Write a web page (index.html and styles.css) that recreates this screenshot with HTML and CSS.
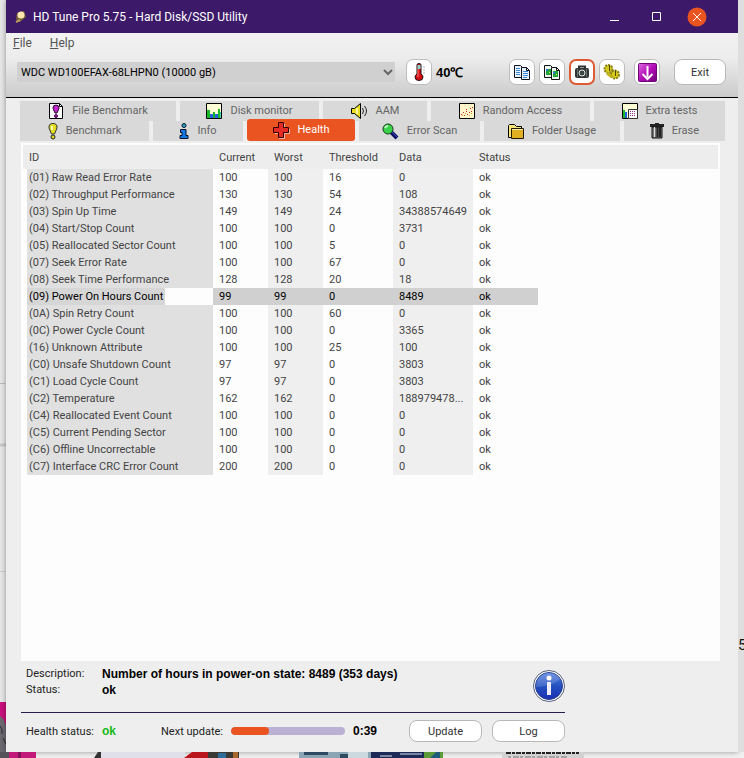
FILE: index.html
```html
<!DOCTYPE html>
<html lang="en">
  <head>
    <meta charset="UTF-8" />
    <meta name="viewport" content="width=device-width, initial-scale=1.0" />
    <title>HD Tune Pro 5.75 - Hard Disk/SSD Utility</title>
    <link rel="stylesheet" href="styles.css">
  </head>
  <body>
    <div class="desktop">
      <div class="edge edge-left">
        <svg width="6" height="376" viewBox="0 0 6 376">
          <path d="M0 7.500h5" stroke="#bbb" />
          <path d="M0 69h6" stroke="#c8c8c8" stroke-width="3" />
          <path d="M0 195.500h5" stroke="#ccc" />
          <path d="M0 326h6v24H0z" fill="#c9107c" />
          <path d="M0 340q4 2 6 10v26H0z" fill="#6c6870" />
          <path d="M0 350q3 3 2 8M3 362l3 6" stroke="#2a2a2e" fill="none" />
        </svg>
      </div>

      <main class="window">
        <header class="titlebar">
          <svg class="app-icon" width="12" height="14" viewBox="0 0 12 14">
            <path d="M2 3 9 1l2 6-6 5-4-3z" fill="#73613c" />
            <circle cx="6" cy="5" r="3.500" fill="#ffe9ae" />
            <path d="M1 12l4-2" stroke="#bb9c5d" stroke-width="2" />
          </svg>
          <h1>HD Tune Pro 5.75 - Hard Disk/SSD Utility</h1>
          <div class="window-controls">
            <button aria-label="Minimize">
              <svg width="20" height="20" viewBox="0 0 20 20"><path d="M5 13.500h9" stroke="#fff" /></svg>
            </button>
            <button aria-label="Maximize">
              <svg width="20" height="20" viewBox="0 0 20 20"><path d="M6.500 5.500h8v8h-8z" fill="none" stroke="#fff" /></svg>
            </button>
            <button aria-label="Close">
              <svg width="20" height="20" viewBox="0 0 20 20">
                <circle cx="10" cy="10" r="9.500" fill="#e95420" />
                <path d="M6 6l8 8M14 6l-8 8" stroke="#fff" />
              </svg>
            </button>
          </div>
        </header>

        <div class="chrome">
          <nav class="menubar">
            <a href="#"><u>F</u>ile</a>
            <a href="#"><u>H</u>elp</a>
          </nav>
          <div class="toolbar">
            <div class="drive">
              <select aria-label="Drive">
                <option>WDC WD100EFAX-68LHPN0 (10000 gB)</option>
              </select>
              <svg width="10" height="8" viewBox="0 0 10 8"><path d="M1 2l4 4 4-4" fill="none" stroke="#666" stroke-width="2" /></svg>
            </div>
            <button class="tool" aria-label="Temperature">
              <svg width="16" height="18" viewBox="0 0 16 18">
                <path d="M6 2q0-1.500 2-1.500t2 1.500v9q2 1 2 3 0 3.500-4 3.500T4 14q0-2 2-3z" fill="#d40c14" stroke="#211" />
                <path d="M6.500 2h3v4h-3z" fill="#8fd9d0" />
                <path d="M7 6v8" stroke="#ff8a86" />
                <path d="M12 4h2M12 7h2M12 10h2" stroke="#bbb" />
              </svg>
            </button>
            <span class="temp">40℃</span>
            <div class="tools">
              <button class="tool" aria-label="Copy text">
                <svg width="18" height="17" viewBox="0 0 18 17">
                  <path d="M1.500 1.500h6l2 2v10h-8z" fill="#e9f3ff" stroke="#112" />
                  <path d="M3 4.500h4M3 6.500h4M3 8.500h4M3 10.500h4" stroke="#3d87d8" />
                  <path d="M8.500 3.500h5l3 3v9h-8z" fill="#e9f3ff" stroke="#112" />
                  <path d="M13.500 3.500v3h3" fill="none" stroke="#112" />
                  <path d="M10 7.500h5M10 9.500h5M10 11.500h5M10 13.500h4" stroke="#3d87d8" />
                </svg>
              </button>
              <button class="tool" aria-label="Copy screenshot">
                <svg width="18" height="17" viewBox="0 0 18 17">
                  <path d="M1.500 1.500h6l2 2v10h-8z" fill="#eef6f2" stroke="#111" />
                  <path d="M3 5h5v6H3z" fill="#22a53a" />
                  <path d="M8.500 3.500h5l3 3v9h-8z" fill="#eef6f2" stroke="#111" />
                  <path d="M13.500 3.500v3h3" fill="none" stroke="#111" />
                  <path d="M10 7h5v6h-5z" fill="#22a53a" />
                  <path d="M3 5h2v2H3zM10 8h2v2h-2z" fill="#3079c9" />
                  <path d="M6 8h1v1H6zM13 10h1v1h-1z" fill="#f5e33a" />
                </svg>
              </button>
              <button class="tool focused" aria-label="Save screenshot">
                <svg width="16" height="14" viewBox="0 0 16 14">
                  <path d="M5 3V1.500h6V3" fill="none" stroke="#333" stroke-width="2" />
                  <rect x="1" y="3" width="14" height="10" rx="2" fill="#303735" />
                  <circle cx="8" cy="8" r="3" fill="#3b4743" stroke="#e8e8e8" />
                  <path d="M3.500 4v8M12.500 4v8" stroke="#68736f" />
                </svg>
              </button>
              <button class="tool" aria-label="Options">
                <svg width="18" height="16" viewBox="0 0 18 16">
                  <circle cx="5.500" cy="5" r="4" fill="#d8cb20" />
                  <circle cx="12" cy="10.500" r="4" fill="#d8cb20" />
                  <circle cx="5.500" cy="5" r="4" fill="none" stroke="#8a8012" stroke-width="2" stroke-dasharray="2 1" />
                  <circle cx="12" cy="10.500" r="4" fill="none" stroke="#8a8012" stroke-width="2" stroke-dasharray="2 1" />
                  <path d="M4 9l5 4" stroke="#c0b21b" stroke-width="3" />
                  <path d="M6.500 1v6M12.500 6v6" stroke="#4d470b" />
                </svg>
              </button>
              <button class="tool tool-save" aria-label="Save">
                <svg width="19" height="19" viewBox="0 0 19 19">
                  <defs>
                    <linearGradient id="purple" x2="1" y2="1">
                      <stop stop-color="#dc6ae0" />
                      <stop offset="0.500" stop-color="#b30cb8" />
                      <stop offset="1" stop-color="#720078" />
                    </linearGradient>
                  </defs>
                  <rect x="0.500" y="0.500" width="18" height="18" rx="1" fill="url(#purple)" stroke="#6e0675" />
                  <path d="M9.500 3v11" stroke="#fff" stroke-width="2" />
                  <path d="M4.500 11l5 5 5-5" fill="none" stroke="#fff" stroke-width="2" />
                </svg>
              </button>
              <button class="push exit">Exit</button>
            </div>
          </div>
        </div>

        <nav class="tabs">
          <div class="tab-row tab-row-top">
            <button class="tab">
              <svg width="16" height="18" viewBox="0 0 16 18">
                <path d="M1.500 1.500h10l3 3v12h-13z" fill="#fff" stroke="#000" />
                <path d="M11.500 1.500v3h3" fill="none" stroke="#000" />
                <path d="M8 3q3.500 0 3 3.500L9 11H7L5 6.500Q4.500 3 8 3z" fill="#c026c4" stroke="#300634" />
                <circle cx="8" cy="14" r="1.500" fill="#c026c4" stroke="#300634" />
              </svg>
              File Benchmark
            </button>
            <button class="tab">
              <svg width="16" height="16" viewBox="0 0 16 16">
                <path d="M0.500 0.500h15v15H0.500z" fill="#ffffd8" stroke="#000" />
                <path d="M1 7h3v8H1zM7 9h2v6H7zM12 6h2v9h-2z" fill="#19b928" />
                <path d="M4 11h3v4H4zM9 11h3v4H9z" fill="#2460d8" />
                <path d="M14 9h1v6h-1z" fill="#50d8b0" />
              </svg>
              Disk monitor
            </button>
            <button class="tab">
              <svg width="17" height="16" viewBox="0 0 17 16">
                <path d="M0.500 5.500h3l6-5v15l-6-5h-3z" fill="#e8dc24" stroke="#000" />
                <path d="M6 5v6" stroke="#fff79a" stroke-width="2" />
                <path d="M11.500 5q2 3 0 6M13.500 3q4 5 0 10" fill="none" stroke="#222" />
              </svg>
              AAM
            </button>
            <button class="tab">
              <svg width="16" height="16" viewBox="0 0 16 16">
                <path d="M0.500 0.500h15v15H0.500z" fill="#fff6cc" stroke="#000" />
                <path d="M2 11.500h1M4 9.500h1M5 12.500h1M7 8.500h1M8 11.500h1M10 9.500h1M11 5.500h1M13 4.500h1M12 8.500h1M7 6.500h1" stroke="#c22" />
                <path d="M3 12.500h1M6 10.500h1M10 12.500h1M12 10.500h1" stroke="#d8a020" />
              </svg>
              Random Access
            </button>
            <button class="tab">
              <svg width="16" height="16" viewBox="0 0 16 16">
                <path d="M0.500 0.500h15v15H0.500z" fill="#ffffd8" stroke="#000" />
                <path d="M1 7h2v8H1z" fill="#19b928" />
                <path d="M3 9h2v6H3z" fill="#2460d8" />
                <path d="M6.500 6.500h9v9h-9z" fill="#fff" stroke="#333" />
                <path d="M8 8.500h6M8 10.500h6M8 12.500h6" stroke="#a02a9c" stroke-dasharray="1 1" />
              </svg>
              Extra tests
            </button>
          </div>
          <div class="tab-row tab-row-bottom">
            <button class="tab">
              <svg width="10" height="17" viewBox="0 0 10 17">
                <path d="M5 0.500Q9.500 0.500 9 5L6.500 11h-3L1 5Q0.500 0.500 5 0.500z" fill="#e6dc1e" stroke="#333" />
                <path d="M4 3v4" stroke="#fffbb8" stroke-width="2" />
                <circle cx="5" cy="14" r="2" fill="#e6dc1e" stroke="#222" />
              </svg>
              Benchmark
            </button>
            <button class="tab">
              <svg width="10" height="16" viewBox="0 0 10 16">
                <circle cx="5" cy="2.500" r="2" fill="#2ba6c8" stroke="#012" />
                <path d="M1.500 6.500h5.500v6h2v3h-8v-3h2v-3h-1.500z" fill="#1677e8" stroke="#012" />
              </svg>
              Info
            </button>
            <button class="tab active">
              <svg width="17" height="17" viewBox="0 0 17 17">
                <path d="M6 2h6v5h5v5h-5v5H6v-5H2V7h4z" fill="#e9b0a0" />
                <path d="M5.500 0.500h5v5h5v5h-5v5h-5v-5h-5v-5h5z" fill="#e32a24" stroke="#300" />
              </svg>
              Health
            </button>
            <button class="tab">
              <svg width="17" height="17" viewBox="0 0 17 17">
                <path d="M9 9l6 6" stroke="#101060" stroke-width="4" />
                <path d="M10 9l5 5" stroke="#3b50d0" />
                <circle cx="6" cy="6" r="5" fill="#3bd24b" stroke="#163c1b" />
                <path d="M3 5q1-2 3-2" fill="none" stroke="#c8ffc8" stroke-width="2" />
              </svg>
              Error Scan
            </button>
            <button class="tab">
              <svg width="16" height="16" viewBox="0 0 16 16">
                <path d="M0.500 14.500v-12l1-1h5l2 2h5v11z" fill="#f8e67a" stroke="#000" />
                <path d="M3.500 5.500h12v10h-12z" fill="#e0b022" stroke="#221a00" />
                <path d="M4 6.500h11" stroke="#fff0a0" />
              </svg>
              Folder Usage
            </button>
            <button class="tab">
              <svg width="14" height="16" viewBox="0 0 14 16">
                <path d="M0 1h14v3H0z" fill="#222" />
                <path d="M5 0h4v2H5z" fill="#222" />
                <path d="M2 4h10v11H2z" fill="#777" stroke="#111" />
                <path d="M4.500 4v10" stroke="#ddd" />
                <path d="M7.500 4v10M10 4v10" stroke="#222" stroke-width="2" />
              </svg>
              Erase
            </button>
          </div>
        </nav>

        <section class="panel">
          <table>
            <colgroup>
              <col class="col-id" />
              <col class="col-current" />
              <col class="col-worst" />
              <col class="col-threshold" />
              <col class="col-data" />
              <col class="col-status" />
              <col />
            </colgroup>
            <thead>
              <tr><th>ID</th><th>Current</th><th>Worst</th><th>Threshold</th><th>Data</th><th>Status</th><th></th></tr>
            </thead>
            <tbody>
              <tr><td><span>(01) Raw Read Error Rate</span></td><td>100</td><td>100</td><td>16</td><td>0</td><td>ok</td></tr>
              <tr><td><span>(02) Throughput Performance</span></td><td>130</td><td>130</td><td>54</td><td>108</td><td>ok</td></tr>
              <tr><td><span>(03) Spin Up Time</span></td><td>149</td><td>149</td><td>24</td><td>34388574649</td><td>ok</td></tr>
              <tr><td><span>(04) Start/Stop Count</span></td><td>100</td><td>100</td><td>0</td><td>3731</td><td>ok</td></tr>
              <tr><td><span>(05) Reallocated Sector Count</span></td><td>100</td><td>100</td><td>5</td><td>0</td><td>ok</td></tr>
              <tr><td><span>(07) Seek Error Rate</span></td><td>100</td><td>100</td><td>67</td><td>0</td><td>ok</td></tr>
              <tr><td><span>(08) Seek Time Performance</span></td><td>128</td><td>128</td><td>20</td><td>18</td><td>ok</td></tr>
              <tr class="selected"><td><span>(09) Power On Hours Count</span></td><td>99</td><td>99</td><td>0</td><td>8489</td><td>ok</td></tr>
              <tr><td><span>(0A) Spin Retry Count</span></td><td>100</td><td>100</td><td>60</td><td>0</td><td>ok</td></tr>
              <tr><td><span>(0C) Power Cycle Count</span></td><td>100</td><td>100</td><td>0</td><td>3365</td><td>ok</td></tr>
              <tr><td><span>(16) Unknown Attribute</span></td><td>100</td><td>100</td><td>25</td><td>100</td><td>ok</td></tr>
              <tr><td><span>(C0) Unsafe Shutdown Count</span></td><td>97</td><td>97</td><td>0</td><td>3803</td><td>ok</td></tr>
              <tr><td><span>(C1) Load Cycle Count</span></td><td>97</td><td>97</td><td>0</td><td>3803</td><td>ok</td></tr>
              <tr><td><span>(C2) Temperature</span></td><td>162</td><td>162</td><td>0</td><td>188979478...</td><td>ok</td></tr>
              <tr><td><span>(C4) Reallocated Event Count</span></td><td>100</td><td>100</td><td>0</td><td>0</td><td>ok</td></tr>
              <tr><td><span>(C5) Current Pending Sector</span></td><td>100</td><td>100</td><td>0</td><td>0</td><td>ok</td></tr>
              <tr><td><span>(C6) Offline Uncorrectable</span></td><td>100</td><td>100</td><td>0</td><td>0</td><td>ok</td></tr>
              <tr><td><span>(C7) Interface CRC Error Count</span></td><td>200</td><td>200</td><td>0</td><td>0</td><td>ok</td></tr>
            </tbody>
          </table>
        </section>

        <footer class="details">
          <div class="summary">
            <dl>
              <dt>Description:</dt>
              <dd>Number of hours in power-on state: 8489 (353 days)</dd>
              <dt>Status:</dt>
              <dd>ok</dd>
            </dl>
            <svg width="32" height="32" viewBox="0 0 32 32">
              <defs>
                <linearGradient id="blue" x2="0" y2="1">
                  <stop stop-color="#5c86e0" />
                  <stop offset="0.500" stop-color="#2350c0" />
                  <stop offset="1" stop-color="#1c2fb4" />
                </linearGradient>
              </defs>
              <circle cx="16" cy="16" r="15.500" fill="#fff" stroke="#56637e" />
              <circle cx="16" cy="16" r="13.500" fill="url(#blue)" stroke="#2a4390" />
              <path d="M3 17A13 13 0 0 1 27 9Q18 17 3 17z" fill="#fff" opacity="0.150" />
              <circle cx="16" cy="8" r="2.500" fill="#fff" />
              <path d="M14 12h4v13h-4z" fill="#eef" />
            </svg>
          </div>
          <div class="status-row">
            <span class="label">Health status:</span>
            <span class="health">ok</span>
            <label class="next" for="next-update">Next update:</label>
            <progress id="next-update" value="33" max="100"></progress>
            <span class="countdown">0:39</span>
            <button class="push">Update</button>
            <button class="push">Log</button>
          </div>
        </footer>
      </main>

      <div class="edge edge-right">5</div>

      <!-- thumbnails showing under the window -->
      <svg class="strip" width="744" height="6" viewBox="0 0 744 6">
        <path d="M0 0h9v6H0z" fill="#55525a" />
        <path d="M9 0h27v6H9z" fill="#c2187a" />
        <path d="M18 0h3v6h-3z" fill="#841258" />
        <path d="M94 6l4-6h3v6z" fill="#333" />
        <path d="M101 0h84v6h-84z" fill="#dfe0ea" />
        <path d="M184 6l8-6h16v6z" fill="#b8161c" />
        <path d="M208 0h31v6h-31z" fill="#3b3a34" />
        <path d="M218 1h8v5h-8z" fill="#2e6c9c" />
        <path d="M233 0h5v6h-5z" fill="#a9682c" />
        <path d="M299 0h72v6h-72z" fill="#8ba5b4" />
        <path d="M304 0h24v3h-24zM340 2h14v4h-14z" fill="#2c4a62" />
        <path d="M348 0h20v6h-20z" fill="#ccd9de" />
        <path d="M371 0h53v6h-53z" fill="#1d2a58" />
        <path d="M400 2h22M380 4h12" stroke="#d8dff0" />
        <path d="M424 0h19v6h-19z" fill="#5d9a38" />
        <path d="M430 6l6-6h4v6z" fill="#1f5b7a" />
        <path d="M502 0h82v6h-82z" fill="#d2d2d2" />
        <path d="M506 1h73" stroke="#222" stroke-width="2" stroke-dasharray="5 1 3 1" />
        <path d="M508 5h60" stroke="#777" stroke-dasharray="3 2 6 1" />
      </svg>
    </div>
  </body>
</html>
```
FILE: styles.css
```css
* {
  box-sizing: border-box;
}
body {
  margin: 0;
  font-family: Roboto, "Liberation Sans", sans-serif;
  font-size: 11px;
  color: #444;
  background: #f0f0f0;
}
button,
select {
  font: inherit;
  color: inherit;
  border: none;
  margin: 0;
  padding: 0;
  background: none;
}
svg {
  display: block;
  flex: none;
}

/* desktop behind the window */
.desktop {
  display: grid;
  grid-template-columns: 6px minmax(0, 1fr) 6px;
  grid-template-rows: 1fr 6px;
  min-height: 100vh;
  overflow: hidden;
}
.edge {
  display: flex;
  align-items: flex-end;
  overflow: hidden;
}
.edge-left {
  background: #e6e6e6;
}
.edge-right {
  padding-bottom: 98px;
  font-size: 15px;
  line-height: 18px;
  color: #111;
  background: #dedede;
}
.strip {
  grid-column: 1 / -1;
}
.window {
  display: flex;
  flex-direction: column;
  background: #eee;
  box-shadow: 0 0 5px rgba(0, 0, 0, 0.4);
}

.titlebar {
  display: flex;
  align-items: center;
  height: 33px;
  padding: 0 21px 0 9px;
  background: #3d1a69;
  color: #fff;
}
.titlebar h1 {
  flex: 1;
  margin: 0 0 0 6px;
  font-size: 12px;
  font-weight: normal;
}
.window-controls {
  display: flex;
}
.window-controls button {
  display: flex;
  justify-content: center;
  width: 41px;
}

.chrome {
  background: linear-gradient(#f2f2f2, #ececec 40%, #cbcbcb);
  border-bottom: 1px solid #000;
}
.menubar {
  display: flex;
  gap: 18px;
  height: 20px;
  padding-left: 7px;
  font-size: 12px;
  line-height: 20px;
}
.menubar a {
  color: #555;
  text-decoration: none;
}
.toolbar {
  display: flex;
  align-items: center;
  padding: 6px 12px 12px 11px;
}
.drive {
  display: grid;
  flex: 1;
  align-items: center;
  margin-right: 11px;
}
.drive select {
  grid-area: 1 / 1;
  height: 20px;
  padding-left: 4px;
  appearance: none;
  background: #d0d0d0;
  color: #000;
}
.drive svg {
  grid-area: 1 / 1;
  justify-self: end;
  margin-right: 2px;
  pointer-events: none;
}
.tool {
  display: flex;
  align-items: center;
  justify-content: center;
  width: 26px;
  height: 26px;
  border: 1px solid #bcbcbc;
  border-radius: 7px;
  background: #fff;
}
.tool.focused {
  border: 2px solid #dd5a35;
}
.tool-save {
  margin-left: 5px;
}
.temp {
  width: 73px;
  margin-left: 4px;
  font-family: "Liberation Sans", Arial, sans-serif;
  font-size: 13px;
  font-weight: bold;
  color: #000;
}
.tools {
  display: flex;
  gap: 4px;
}
.push {
  width: 73px;
  height: 22px;
  border: 1px solid #b8b8b8;
  border-radius: 8px;
  background: #fff;
  color: #333;
}
.exit {
  width: 52px;
  height: 26px;
  margin-left: 10px;
}

.tabs {
  padding: 3px 13px 2px 14px;
}
.tab-row {
  display: grid;
  column-gap: 4px;
}
.tab-row-top {
  grid-template-columns: 156fr 139fr 104fr 159fr 131fr;
}
.tab-row-bottom {
  grid-template-columns: 129fr 90fr 108fr 121fr 136fr 101fr;
}
.tab {
  display: flex;
  align-items: center;
  justify-content: center;
  gap: 8px;
  height: 20px;
  background: #d9d9d9;
  color: #666;
  line-height: 14px;
  white-space: nowrap;
}
.tab.active {
  height: 22px;
  margin-top: -2px;
  border-radius: 3px;
  background: #e95420;
  color: #fff;
}

.panel {
  flex: 1;
  margin: 0 18px 0 15px;
  padding: 2px 2px 0;
  background: #fdfdfd;
}
table {
  width: 100%;
  table-layout: fixed;
  border-collapse: collapse;
}
.col-id {
  width: 190px;
}
.col-current,
.col-worst {
  width: 55px;
}
.col-threshold {
  width: 70px;
}
.col-data {
  width: 80px;
}
.col-status {
  width: 65px;
}
th {
  height: 24px;
  padding: 0 6px;
  background: #ededed;
  font-weight: normal;
  text-align: left;
}
td {
  height: 17px;
  padding: 0 6px;
  line-height: 17px;
  white-space: nowrap;
}
td:first-child {
  padding: 0 0 0 4px;
}
td:first-child span {
  display: block;
  padding-left: 2px;
  background: #e0e0e0;
}
td:nth-child(3),
td:nth-child(5) {
  background: #efefef;
}
.selected td {
  background: #d0d0d0;
  color: #000;
}
.selected td:first-child {
  background: none;
}
.selected td:first-child span {
  width: 138px;
  background: #d6d6d6;
}

.details {
  width: 544px;
  max-width: 100%;
  margin-left: 15px;
  padding-bottom: 10px;
  color: #222;
}
.summary {
  display: flex;
  justify-content: space-between;
  align-items: center;
  padding: 5px 0 6px 5px;
  border-bottom: 1px solid #2b1c4f;
}
dl {
  display: grid;
  grid-template-columns: 76px 1fr;
  margin: 0;
  padding-bottom: 8px;
  line-height: 16px;
}
dd {
  margin: 0;
  font-family: "Liberation Sans", Arial, sans-serif;
  font-size: 12px;
  font-weight: bold;
  color: #000;
}
.status-row {
  display: flex;
  align-items: center;
  padding: 7px 0 0 5px;
}
.label {
  width: 76px;
}
.health,
.countdown {
  font-family: "Liberation Sans", Arial, sans-serif;
  font-size: 12px;
  font-weight: bold;
}
.health {
  width: 59px;
  color: #16b916;
}
.next {
  width: 70px;
}
progress {
  flex: 1;
  min-width: 0;
  height: 8px;
  appearance: none;
  border: none;
  border-radius: 4px;
  overflow: hidden;
  background: #b9b0d3;
}
progress::-webkit-progress-bar {
  background: #b9b0d3;
}
progress::-webkit-progress-value {
  border-radius: 4px;
  background: #e95420;
}
.countdown {
  width: 56px;
  margin-left: 8px;
  color: #000;
}
.status-row .push + .push {
  margin-left: 10px;
}
```
